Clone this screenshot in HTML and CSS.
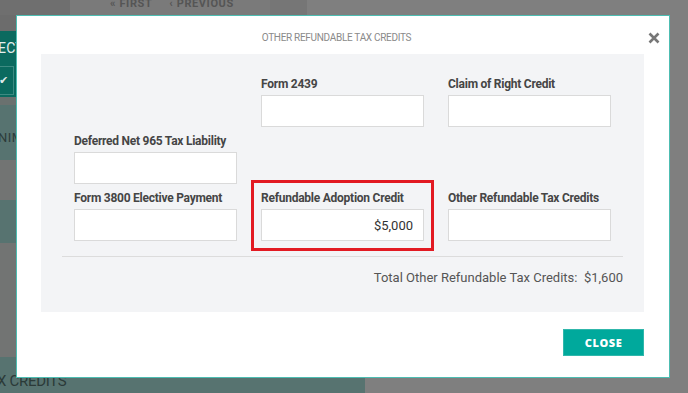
FILE: index.html
```html
<!DOCTYPE html>
<html lang="en">
<head>
    <meta charset="UTF-8">
    <meta name="viewport" content="width=device-width, initial-scale=1.0">
    <title>Other Refundable Tax Credits</title>
    <link rel="stylesheet" href="styles.css">
</head>
<body>
    <div class="page">
        <div class="topbar">
            <div class="topbar-left"></div>
            <div class="pager">
                <span>&laquo; First</span>
                <span>&lsaquo; Previous</span>
            </div>
            <div class="topbar-edge"></div>
        </div>
        <div class="main">
            <aside class="side">
                <div class="band band-top"></div>
                <div class="band band-dark">
                    <div class="band-title">ECTION</div>
                    <div class="checkrow"><span class="check">&#10004;</span></div>
                </div>
                <div class="band band-strip"></div>
                <div class="band band-teal band-a"><span class="band-text">NIMUM</span></div>
                <div class="band band-plain band-b"></div>
                <div class="band band-teal band-c"></div>
                <div class="band band-plain band-d"></div>
                <div class="band band-teal band-e">
                    <span class="band-foot">X CREDITS</span>
                    <span class="dash"></span>
                </div>
            </aside>
        </div>
    </div>

    <div class="modal">
        <div class="modal-head">
            <h2>Other Refundable Tax Credits</h2>
            <button type="button" class="modal-x" aria-label="Close">
                <svg width="12" height="12" viewBox="0 0 12 12">
                    <path d="M1.5 1.5 L10.5 10.5 M10.5 1.5 L1.5 10.5" stroke="#777" stroke-width="2.6" fill="none"/>
                </svg>
            </button>
        </div>
        <div class="panel">
            <div class="fields">
                <div class="field col-2">
                    <label for="form2439">Form 2439</label>
                    <input type="text" id="form2439">
                </div>
                <div class="field">
                    <label for="claimRight">Claim of Right Credit</label>
                    <input type="text" id="claimRight">
                </div>
                <div class="field col-1">
                    <label for="deferred965">Deferred Net 965 Tax Liability</label>
                    <input type="text" id="deferred965">
                </div>
                <div class="field col-1">
                    <label for="form3800">Form 3800 Elective Payment</label>
                    <input type="text" id="form3800">
                </div>
                <div class="field highlight">
                    <label for="adoption">Refundable Adoption Credit</label>
                    <input type="text" id="adoption" value="$5,000">
                </div>
                <div class="field">
                    <label for="otherCredits">Other Refundable Tax Credits</label>
                    <input type="text" id="otherCredits">
                </div>
            </div>
            <div class="total">Total Other Refundable Tax Credits:&nbsp; $1,600</div>
        </div>
        <div class="modal-foot">
            <button type="button" class="btn-close">Close</button>
        </div>
    </div>
</body>
</html>
```

FILE: styles.css
```css
body {
    margin: 0;
    width: 688px;
    height: 393px;
    overflow: hidden;
    background-color: #7f7f7f;
    font-family: 'Roboto', 'Liberation Sans', sans-serif;
    color: #333;
}

/* dimmed page behind the dialog */
.page {
    height: 393px;
    display: flex;
    flex-direction: column;
}
.topbar {
    height: 15px;
    display: flex;
    overflow: hidden;
}
.topbar-left {
    width: 70px;
    background-color: #6f6f6f;
}
.pager {
    width: 160px;
    display: flex;
    gap: 17px;
    padding-left: 40px;
    background-color: #7a7a7a;
    font-weight: bold;
    font-size: 11px;
    letter-spacing: 0.6px;
    text-transform: uppercase;
    white-space: nowrap;
    color: #555;
    line-height: 12px;
    margin-top: -2px;
}
.topbar-edge {
    width: 37px;
    background-color: #767676;
}
.main {
    flex: 1;
    display: flex;
}
.side {
    width: 365px;
    display: flex;
    flex-direction: column;
}
.band-plain {
    background-color: #727473;
}
.band-teal {
    background-color: #577370;
}
.band-top {
    height: 16px;
    background-color: #6c6c6c;
}
.band-dark {
    height: 66px;
    background-color: #0b6a5f;
    color: #e6eeee;
}
.band-title {
    font-size: 14px;
    letter-spacing: 0.2px;
    margin-left: -2px;
    padding-top: 9px;
    height: 22px;
}
.checkrow {
    margin-top: 4px;
    width: 13px;
    height: 27px;
    border-right: 1px solid #3e8b82;
    border-top: 1px solid #3e8b82;
    border-bottom: 1px solid #3e8b82;
    display: flex;
    align-items: center;
}
.check {
    font-size: 11px;
    color: #dfe9e8;
    margin-left: -1px;
}
.band-strip {
    height: 8px;
    background-color: #6a716f;
}
.band-a {
    height: 55px;
    display: flex;
    align-items: center;
    padding-top: 10px;
    box-sizing: border-box;
}
.band-text {
    font-size: 13px;
    letter-spacing: 0.5px;
    color: #2d3b39;
    margin-left: -2px;
}
.band-b {
    height: 40px;
}
.band-c {
    height: 43px;
}
.band-d {
    height: 114px;
}
.band-e {
    flex: 1;
    display: flex;
    align-items: flex-end;
    justify-content: space-between;
    padding-bottom: 4px;
}
.band-foot {
    font-size: 15px;
    letter-spacing: -0.3px;
    color: #2b3a38;
    margin-left: -3px;
    line-height: 16px;
}
.dash {
    width: 13px;
    height: 2px;
    background-color: #2b3a38;
    margin-right: 17px;
    margin-bottom: 14px;
}

/* dialog */
.modal {
    position: absolute;
    left: 16px;
    top: 15px;
    width: 603px;
    height: 361px;
    background-color: #fff;
    border: 1px solid #4dbdb2;
    padding: 0 25px 0 24px;
}
.modal-head {
    position: relative;
    height: 38px;
    padding-top: 15px;
    box-sizing: border-box;
}
.modal-head h2 {
    margin: 0;
    padding-right: 12px;
    text-align: center;
    font-weight: normal;
    font-size: 10px;
    line-height: 14px;
    letter-spacing: -0.3px;
    text-transform: uppercase;
    color: #8a8a8a;
}
.modal-x {
    position: absolute;
    right: -16px;
    top: 16px;
    padding: 0;
    border: none;
    background: none;
    width: 12px;
    height: 12px;
    display: flex;
}
.panel {
    background-color: #f3f4f6;
    padding: 22px 21px 26px;
}
.fields {
    display: grid;
    grid-template-columns: repeat(3, 1fr);
    column-gap: 24px;
    row-gap: 6px;
    padding: 0 12px;
}
.col-1 {
    grid-column: 1;
}
.col-2 {
    grid-column: 2;
}
.field {
    display: flex;
    flex-direction: column;
}
.field label {
    font-weight: bold;
    font-size: 12px;
    letter-spacing: -0.25px;
    white-space: nowrap;
    line-height: 16px;
    color: #454545;
    margin-bottom: 3px;
}
.field input {
    height: 32px;
    box-sizing: border-box;
    border: 1px solid #dadada;
    background-color: #fff;
    padding: 0 10px;
    font-family: 'Roboto', sans-serif;
    font-size: 13px;
    color: #333;
    text-align: right;
    width: 100%;
}
.highlight {
    outline: 3px solid #e21a22;
    outline-offset: 7px;
}
.total {
    margin-top: 15px;
    border-top: 1px solid #dcdcdc;
    padding-top: 13px;
    line-height: 16px;
    text-align: right;
    font-size: 13px;
    color: #555;
}
.modal-foot {
    display: flex;
    justify-content: flex-end;
    padding-top: 17px;
}
.btn-close {
    width: 81px;
    height: 27px;
    background-color: #00a99c;
    border: 1px solid #30b7ab;
    color: #fff;
    font-family: 'Open Sans', sans-serif;
    font-weight: 800;
    font-size: 11px;
    letter-spacing: 0.6px;
    text-transform: uppercase;
    padding: 0;
    cursor: pointer;
}
```
